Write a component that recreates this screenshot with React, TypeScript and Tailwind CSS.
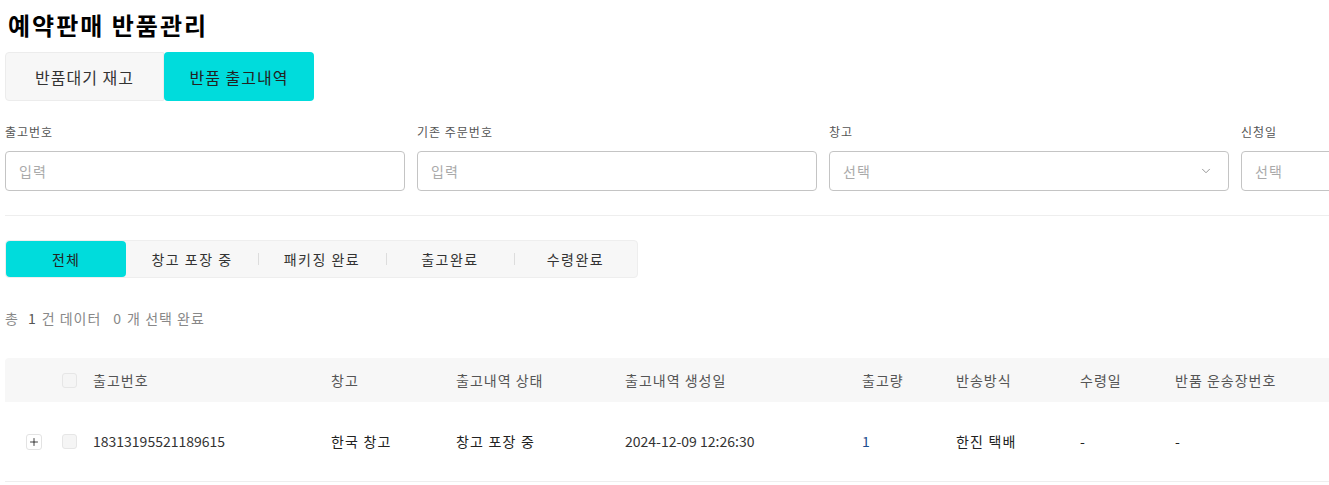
import React from 'react';
import { ChevronDown, Plus } from 'lucide-react';

const filters = [
  { label: '출고번호', placeholder: '입력', select: false },
  { label: '기존 주문번호', placeholder: '입력', select: false },
  { label: '창고', placeholder: '선택', select: true },
  { label: '신청일', placeholder: '선택', select: false },
];

const statusTabs = [
  { label: '창고 포장 중', width: 'w-[132px]', sep: false },
  { label: '패키징 완료', width: 'w-[128px]', sep: true },
  { label: '출고완료', width: 'w-[128px]', sep: true },
  { label: '수령완료', width: 'w-[123px]', sep: true },
];

const columns = ['출고번호', '창고', '출고내역 상태', '출고내역 생성일', '출고량', '반송방식', '수령일', '반품 운송장번호'];

const gridCols = 'grid grid-cols-[56px_32px_238px_125px_169px_237px_94px_124px_95px_1fr]';

const Checkbox = () => (
  <div className="w-[15px] h-[15px] ml-[1px] rounded-[3px] border border-[#e6e6e6] bg-[#f5f5f5]" />
);

export default function App() {
  return (
    <div
      className="w-full overflow-hidden bg-white text-[#222]"
      style={{ fontFamily: '"Noto Sans CJK KR", "Noto Sans", sans-serif' }}
    >
      <div className="w-[1641px] pl-[5px]">
        {/* Header */}
        <h1 className="pl-[3px] pt-[7px] text-[24px] leading-[36px] font-bold tracking-[2px] text-black">
          예약판매 반품관리
        </h1>

        {/* Tabs */}
        <div className="mt-[9px] flex h-[49px]">
          <button className="w-[159px] h-full rounded-l-[4px] border border-[#ececec] bg-[#f7f7f7] text-[16px] tracking-[1px] text-[#333]">
            반품대기 재고
          </button>
          <button className="w-[150px] h-full rounded-[4px] bg-[#00dcdc] text-[16px] tracking-[1px] text-[#222]">
            반품 출고내역
          </button>
        </div>

        {/* Filters */}
        <div className="mt-[22px] grid grid-cols-[400px_400px_400px_400px] gap-x-[12px]">
          {filters.map((f) => (
            <div key={f.label}>
              <div className="h-[18px] text-[12px] leading-[18px] tracking-[1px] text-[#555]">{f.label}</div>
              <div className="mt-[10px] h-[40px] rounded-[4px] border border-[#c4c4c4] px-[13px] flex items-center justify-between">
                <span className="text-[14px] tracking-[1px] text-[#aaa]">{f.placeholder}</span>
                {f.select && <ChevronDown className="w-[14px] h-[14px] mr-[2px] text-[#888]" strokeWidth={1.5} />}
              </div>
            </div>
          ))}
        </div>

        <div className="mt-[24px] border-t border-[#eeeeee]" />

        {/* Status filter */}
        <div className="mt-[24px] w-[633px] h-[38px] rounded-[4px] border border-[#eeeeee] bg-[#f7f7f7] flex items-stretch">
          <div className="w-[120px] rounded-[4px] bg-[#00dcdc] flex items-center justify-center text-[14px] tracking-[1px] text-[#222]">
            전체
          </div>
          {statusTabs.map((t) => (
            <div
              key={t.label}
              className={`${t.width} relative flex items-center justify-center text-[14px] tracking-[1.5px] text-[#333]`}
            >
              {t.sep && <span className="absolute left-0 top-1/2 -translate-y-1/2 h-[12px] border-l border-[#dddddd]" />}
              {t.label}
            </div>
          ))}
        </div>

        {/* Count */}
        <div className="mt-[31px] h-[18px] flex items-center text-[14px] leading-[18px] tracking-[1px] text-[#888]">
          <span>총</span>
          <span className="ml-[9px] text-[#555]">1</span>
          <span className="ml-[5px]">건 데이터</span>
          <span className="ml-[12px]">0</span>
          <span className="ml-[5px]">개 선택 완료</span>
        </div>

        {/* Table */}
        <div className="mt-[31px]">
          <div className={`${gridCols} h-[44px] items-center rounded-t-[4px] bg-[#f7f7f7] text-[14px] tracking-[1px] text-[#555]`}>
            <div />
            <Checkbox />
            {columns.map((c) => (
              <div key={c}>{c}</div>
            ))}
          </div>
          <div className={`${gridCols} h-[80px] items-center border-b border-[#eeeeee] text-[14px] text-[#222]`}>
            <div className="flex justify-center">
              <div className="w-[16px] h-[16px] ml-[1px] rounded-[3px] border border-[#e3e3e3] bg-white flex items-center justify-center">
                <Plus className="w-[12px] h-[12px] text-black" strokeWidth={1.5} />
              </div>
            </div>
            <Checkbox />
            <div className="text-[#333]">18313195521189615</div>
            <div className="tracking-[1.2px]">한국 창고</div>
            <div className="tracking-[1.2px]">창고 포장 중</div>
            <div className="text-[#333]">2024-12-09 12:26:30</div>
            <div className="text-[#1d4d8f]">1</div>
            <div className="tracking-[1.2px]">한진 택배</div>
            <div>-</div>
            <div>-</div>
          </div>
        </div>
      </div>
    </div>
  );
}
